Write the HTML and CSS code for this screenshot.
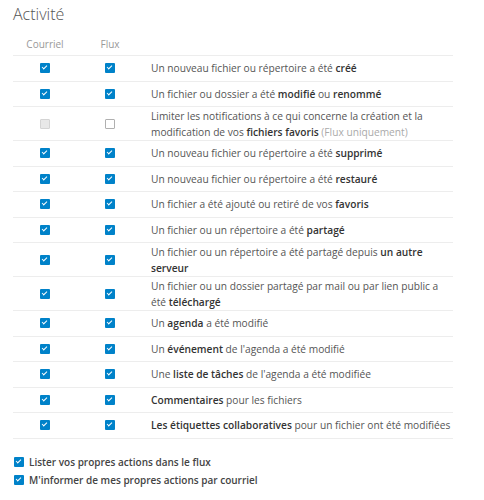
FILE: index.html
```html
<!DOCTYPE html>
<html lang="fr">
<head>
<meta charset="utf-8">
<title>Activité</title>
<link rel="stylesheet" href="styles.css">
</head>
<body>
<div class="section">
  <h2 class="title">Activité</h2>
  <div class="grid">
    <div class="row head">
      <span class="col">Courriel</span>
      <span class="col">Flux</span>
      <span class="txt"></span>
    </div>
    <div class="row"><span class="col"><span class="cb on"></span></span><span class="col"><span class="cb on"></span></span><span class="txt">Un nouveau fichier ou répertoire a été <strong>créé</strong></span></div>
    <div class="row"><span class="col"><span class="cb on"></span></span><span class="col"><span class="cb on"></span></span><span class="txt">Un fichier ou dossier a été <strong>modifié</strong> ou <strong>renommé</strong></span></div>
    <div class="row"><span class="col"><span class="cb disabled"></span></span><span class="col"><span class="cb off"></span></span><span class="txt">Limiter les notifications à ce qui concerne la création et la modification de vos <strong>fichiers favoris</strong> <span class="hint">(Flux uniquement)</span></span></div>
    <div class="row"><span class="col"><span class="cb on"></span></span><span class="col"><span class="cb on"></span></span><span class="txt">Un nouveau fichier ou répertoire a été <strong>supprimé</strong></span></div>
    <div class="row"><span class="col"><span class="cb on"></span></span><span class="col"><span class="cb on"></span></span><span class="txt">Un nouveau fichier ou répertoire a été <strong>restauré</strong></span></div>
    <div class="row"><span class="col"><span class="cb on"></span></span><span class="col"><span class="cb on"></span></span><span class="txt">Un fichier a été ajouté ou retiré de vos <strong>favoris</strong></span></div>
    <div class="row"><span class="col"><span class="cb on"></span></span><span class="col"><span class="cb on"></span></span><span class="txt">Un fichier ou un répertoire a été <strong>partagé</strong></span></div>
    <div class="row"><span class="col"><span class="cb on"></span></span><span class="col"><span class="cb on"></span></span><span class="txt">Un fichier ou un répertoire a été partagé depuis <strong>un autre serveur</strong></span></div>
    <div class="row"><span class="col"><span class="cb on"></span></span><span class="col"><span class="cb on"></span></span><span class="txt">Un fichier ou un dossier partagé par mail ou par lien public a été <strong>téléchargé</strong></span></div>
    <div class="row"><span class="col"><span class="cb on"></span></span><span class="col"><span class="cb on"></span></span><span class="txt">Un <strong>agenda</strong> a été modifié</span></div>
    <div class="row"><span class="col"><span class="cb on"></span></span><span class="col"><span class="cb on"></span></span><span class="txt">Un <strong>événement</strong> de l'agenda a été modifié</span></div>
    <div class="row"><span class="col"><span class="cb on"></span></span><span class="col"><span class="cb on"></span></span><span class="txt">Une <strong>liste de tâches</strong> de l'agenda a été modifiée</span></div>
    <div class="row"><span class="col"><span class="cb on"></span></span><span class="col"><span class="cb on"></span></span><span class="txt"><strong>Commentaires</strong> pour les fichiers</span></div>
    <div class="row"><span class="col"><span class="cb on"></span></span><span class="col"><span class="cb on"></span></span><span class="txt"><strong>Les étiquettes collaboratives</strong> pour un fichier ont été modifiées</span></div>
  </div>
  <div class="options">
    <label class="opt"><span class="cb on"></span><span>Lister vos propres actions dans le flux</span></label>
    <label class="opt"><span class="cb on"></span><span>M'informer de mes propres actions par courriel</span></label>
  </div>
</div>
</body>
</html>
```
FILE: styles.css
```css
html, body {
  margin: 0;
  padding: 0;
  background: #fff;
}
body {
  font-family: "Open Sans", "Noto Sans", sans-serif;
  font-size: 10px;
  color: #555;
}
.section {
  padding: 0 13px;
}
.title {
  margin: 0 0 12px;
  padding-top: 4px;
  font-size: 16px;
  line-height: 20px;
  font-weight: 300;
  color: #555;
}
.grid {
  width: 440px;
}
.row {
  display: flex;
  align-items: center;
  min-height: 24.5px;
  border-bottom: 1px solid #ededed;
}
.row.head {
  min-height: 0;
  align-items: flex-end;
  padding-bottom: 3px;
  line-height: 16px;
  color: #999;
}
.col {
  display: flex;
  justify-content: center;
  flex: none;
}
.col:nth-child(1) { width: 64px; }
.col:nth-child(2) { width: 66px; }
.txt {
  flex: 1;
  padding: 0.5px 0 0.5px 8px;
  font-size: 10.2px;
  line-height: 16px;
}
strong {
  font-weight: 600;
  color: #333;
}
.hint {
  color: #aaa;
}
.cb {
  position: relative;
  display: inline-block;
  width: 10px;
  height: 10px;
  box-sizing: border-box;
  border-radius: 1px;
  flex: none;
}
.cb.on {
  background: #0082c9;
}
.cb.on::after {
  content: "";
  position: absolute;
  left: 2.4px;
  top: 2.2px;
  width: 4.4px;
  height: 2.2px;
  border-left: 1.4px solid #fff;
  border-bottom: 1.4px solid #fff;
  transform: rotate(-45deg);
}
.cb.off {
  background: #fff;
  border: 1px solid #b0b0b0;
}
.cb.disabled {
  background: #e8e8e8;
  border: 1px solid #d4d4d4;
}
.options {
  margin-top: 14px;
  display: flex;
  flex-direction: column;
}
.opt {
  display: flex;
  align-items: center;
  gap: 5px;
  padding-left: 1px;
  line-height: 18px;
  font-weight: 600;
  color: #444;
}
.opt .cb {
  margin-top: 1px;
}
```
